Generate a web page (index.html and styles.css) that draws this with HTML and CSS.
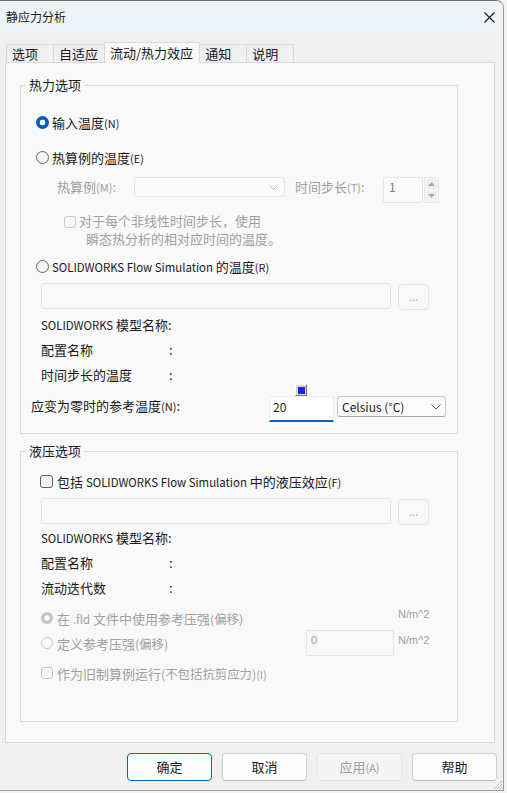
FILE: index.html
```html
<!DOCTYPE html>
<html lang="zh-CN">
<head>
<meta charset="utf-8">
<title>静应力分析</title>
<link rel="stylesheet" href="styles.css">
</head>
<body>
<div class="window">
  <div class="titlebar">
    <span class="title">静应力分析</span>
    <svg class="close" width="11" height="11" viewBox="0 0 11 11"><path d="M0.5 0.5 L10.5 10.5 M10.5 0.5 L0.5 10.5" stroke="#1a1a1a" stroke-width="1.1" fill="none"/></svg>
  </div>

  <div class="tabs">
    <div class="tab">选项</div>
    <div class="tab">自适应</div>
    <div class="tab active">流动/热力效应</div>
    <div class="tab">通知</div>
    <div class="tab">说明</div>
  </div>

  <div class="panel">
    <fieldset class="group g1">
      <legend>热力选项</legend>
      <div class="gbody g1body">
        <div class="row opt first">
          <span class="radio on"></span><span>输入温度<span class="mn">(N)</span></span>
        </div>
        <div class="row opt second">
          <span class="radio"></span><span>热算例的温度<span class="mn">(E)</span></span>
        </div>
        <div class="study">
          <span class="dis slabel">热算例<span class="mn">(M)</span>:</span>
          <div class="combo dcombo">
            <svg width="9" height="5" viewBox="0 0 9 5"><polyline points="0.5,0.5 4.5,4.5 8.5,0.5" fill="none" stroke="#b5b5b5" stroke-width="1"/></svg>
          </div>
          <span class="dis tlabel">时间步长<span class="mn">(T)</span>:</span>
          <div class="spin">
            <div class="spinval">1</div>
            <div class="spinbtns">
              <div class="sbtn"><svg width="7" height="4" viewBox="0 0 7 4"><polygon points="0,4 3.5,0 7,4" fill="#a8a8a8"/></svg></div>
              <div class="sbtn"><svg width="7" height="4" viewBox="0 0 7 4"><polygon points="0,0 3.5,4 7,0" fill="#a8a8a8"/></svg></div>
            </div>
          </div>
        </div>
        <div class="cbrow">
          <span class="check disabled"></span>
          <div class="dis cbtext">
            <div>对于每个非线性时间步长，使用</div>
            <div class="indent">瞬态热分析的相对应时间的温度。</div>
          </div>
        </div>
        <div class="row opt third">
          <span class="radio"></span><span><span class="lat">SOLIDWORKS Flow Simulation</span> 的温度<span class="mn">(R)</span></span>
        </div>
        <div class="filerow">
          <div class="field"></div>
          <div class="dots">...</div>
        </div>
        <div class="info first-info"><span><span class="lat">SOLIDWORKS</span> 模型名称:</span></div>
        <div class="info"><span class="k">配置名称</span><span>:</span></div>
        <div class="info"><span class="k">时间步长的温度</span><span>:</span></div>
        <div class="refrow">
          <span class="reflabel">应变为零时的参考温度<span class="mn">(N)</span>:</span>
          <div class="tempinput">20</div>
          <div class="combo unit">
            <span class="lat">Celsius (°C)</span>
            <svg width="10" height="6" viewBox="0 0 10 6"><polyline points="0.5,0.5 5,5 9.5,0.5" fill="none" stroke="#555" stroke-width="1"/></svg>
          </div>
          <div class="handle"><div class="handle-in"></div></div>
        </div>
      </div>
    </fieldset>

    <fieldset class="group g2">
      <legend>液压选项</legend>
      <div class="gbody g2body">
        <div class="row hcheck">
          <span class="check"></span><span>包括 <span class="lat">SOLIDWORKS Flow Simulation</span> 中的液压效应<span class="mn">(F)</span></span>
        </div>
        <div class="filerow">
          <div class="field"></div>
          <div class="dots">...</div>
        </div>
        <div class="info first-info h"><span><span class="lat">SOLIDWORKS</span> 模型名称:</span></div>
        <div class="info"><span class="k">配置名称</span><span>:</span></div>
        <div class="info"><span class="k">流动迭代数</span><span>:</span></div>
        <div class="prow p1">
          <span class="radio dfill"></span>
          <span class="dis plabel1">在 <span class="lat">.fld</span> 文件中使用参考压强<span class="mc">(偏移)</span></span>
          <span class="unitlbl">N/m^2</span>
        </div>
        <div class="prow p2">
          <span class="radio doff"></span>
          <span class="dis plabel2">定义参考压强<span class="mc">(偏移)</span></span>
          <div class="pinput">0</div>
          <span class="unitlbl u2">N/m^2</span>
        </div>
        <div class="row legacy">
          <span class="check disabled"></span><span class="dis">作为旧制算例运行<span class="mc">(不包括抗剪应力)</span><span class="mn">(I)</span></span>
        </div>
      </div>
    </fieldset>
  </div>

  <div class="buttons">
    <div class="btn default">确定</div>
    <div class="btn">取消</div>
    <div class="btn disabled">应用<span class="mn">(A)</span></div>
    <div class="btn">帮助</div>
  </div>

  <svg class="grip" width="12" height="12" viewBox="0 0 12 12">
    <path d="M11 3 L3 11 M11 6 L6 11 M11 9 L9 11" stroke="#9a9a9a" stroke-width="1" stroke-dasharray="1 1" fill="none"/>
  </svg>
</div>
</body>
</html>
```

FILE: styles.css
```css
html, body {
  margin: 0;
  padding: 0;
}

body {
  background: #f5f5f5;
  font-family: "Noto Sans CJK SC", "Noto Sans", sans-serif;
  font-size: 13px;
  color: #1a1a1a;
  width: 507px;
  height: 793px;
  overflow: hidden;
}

.window {
  position: relative;
  width: 504px;
  height: 791px;
  box-sizing: border-box;
  border-top: 1px solid #6e6e6e;
  border-right: 1px solid #9c9c9c;
  border-bottom: 1px solid #9c9c9c;
  border-top-right-radius: 8px;
  background: #f0f0f0;
  display: flex;
  flex-direction: column;
  overflow: hidden;
}

.titlebar {
  height: 32px;
  flex: none;
  background: #edf3f6;
  display: flex;
  align-items: center;
  padding-left: 6px;
}

.title {
  font-size: 12px;
  line-height: 16px;
}

.close {
  margin-left: auto;
  margin-right: 8px;
}

.lat {
  font-size: 11.4px;
}

.mn {
  font-size: 11px;
}

.mc {
  font-size: 12.4px;
}

.dis {
  color: #a0a0a0;
}

/* Tabs */
.tabs {
  display: flex;
  align-items: flex-end;
  height: 20px;
  margin-top: 9px;
  padding-left: 6px;
  flex: none;
}

.tab {
  height: 18px;
  box-sizing: border-box;
  min-width: 48px;
  border: 1px solid #d9d9d9;
  border-bottom: none;
  margin-left: -1px;
  padding: 0 6px 0 5px;
  line-height: 17px;
  background: #f0f0f0;
  white-space: nowrap;
}

.tab:first-child {
  margin-left: 0;
}

.tab.active {
  position: relative;
  z-index: 2;
  height: 21px;
  margin-bottom: -1px;
  line-height: 20px;
  background: #f9f9f9;
}

/* Panel */
.panel {
  margin-left: 5px;
  width: 490px;
  height: 681px;
  flex: none;
  box-sizing: border-box;
  border: 1px solid #d9d9d9;
  background: #f9f9f9;
  padding: 13px 0 0 14px;
}

.group {
  margin: 0;
  padding: 0;
  width: 438px;
  min-width: 0;
  box-sizing: border-box;
  border: 1px solid #dcdcdc;
}

.group legend {
  margin-left: 5px;
  padding: 0 3px;
  line-height: 18px;
  font-size: 13px;
}

.g2 {
  margin-top: 8px;
}

.g1body {
  padding-bottom: 11px;
}

.g2body {
  padding-bottom: 38px;
}

.row {
  display: flex;
  align-items: center;
  height: 20px;
  white-space: nowrap;
}

.opt {
  margin-left: 15px;
}

.opt.first { margin-top: 18px; }
.opt.second { margin-top: 15px; }
.opt.third { margin-top: 8px; }

.radio {
  flex: none;
  width: 13px;
  height: 13px;
  box-sizing: border-box;
  border-radius: 50%;
  border: 1px solid #6a6a6a;
  background: #f4f4f4;
  margin-right: 3px;
}

.radio.on {
  border: none;
  background: radial-gradient(circle at center, #ffffff 0 2.6px, #005fb8 3.2px);
}

.radio.dfill {
  width: 12px;
  height: 12px;
  border: none;
  background: radial-gradient(circle at center, #ffffff 0 2.4px, #c4c4c4 3px);
  margin-right: 4px;
}

.radio.doff {
  width: 12px;
  height: 12px;
  border: 1px solid #c9c9c9;
  background: #f9f9f9;
  margin-right: 4px;
}

.check {
  flex: none;
  width: 13px;
  height: 13px;
  box-sizing: border-box;
  border: 1px solid #5e5e5e;
  border-radius: 3px;
  background: #f4f4f4;
  margin-right: 4px;
}

.check.disabled {
  width: 12px;
  height: 12px;
  border-color: #c6c6c6;
  background: #f9f9f9;
  margin-right: 4px;
}

/* study row */
.study {
  display: flex;
  align-items: flex-start;
  height: 26px;
  margin-top: 10px;
  margin-left: 36px;
  white-space: nowrap;
}

.slabel {
  width: 77px;
  line-height: 20px;
}

.combo {
  box-sizing: border-box;
  display: flex;
  align-items: center;
  justify-content: space-between;
  border-radius: 3px;
}

.dcombo {
  width: 151px;
  height: 20px;
  border: 1px solid #e6e6e6;
  background: #fafafa;
  justify-content: flex-end;
  padding-right: 6px;
}

.tlabel {
  width: 88px;
  margin-left: 10px;
  line-height: 20px;
}

.spin {
  display: flex;
  gap: 1px;
}

.spinval {
  width: 40px;
  height: 26px;
  box-sizing: border-box;
  border: 1px solid #e6e6e6;
  border-radius: 2px;
  background: #fafafa;
  color: #7c7c7c;
  font-size: 12px;
  line-height: 18px;
  padding-left: 5px;
}

.spinbtns {
  display: flex;
  flex-direction: column;
  width: 15px;
  height: 26px;
  background: #efefef;
  border: 1px solid #e6e6e6;
  box-sizing: border-box;
}

.sbtn {
  flex: 1;
  display: flex;
  align-items: center;
  justify-content: center;
  border: 1px solid #f7f7f7;
}

/* checkbox with two lines */
.cbrow {
  display: flex;
  align-items: flex-start;
  margin-top: 9px;
  margin-left: 43px;
  white-space: nowrap;
}

.cbrow .check {
  margin-top: 4px;
  margin-right: 3px;
}

.cbtext {
  line-height: 18px;
}

.indent {
  padding-left: 7px;
}

/* file row */
.filerow {
  display: flex;
  align-items: flex-start;
  height: 27px;
  margin-top: 7px;
  margin-left: 20px;
}

.field {
  width: 350px;
  height: 26px;
  box-sizing: border-box;
  border: 1px solid #e6e6e6;
  border-radius: 3px;
  background: #f9f9f9;
}

.dots {
  width: 31px;
  height: 26px;
  margin-top: 1px;
  margin-left: 7px;
  box-sizing: border-box;
  border: 1px solid #e6e6e6;
  border-radius: 4px;
  background: #f9f9f9;
  color: #a8a8a8;
  font-size: 11px;
  line-height: 22px;
  text-align: center;
}

/* info rows */
.info {
  display: flex;
  align-items: center;
  height: 25px;
  margin-left: 20px;
  white-space: nowrap;
}

.info.first-info {
  margin-top: 2px;
}

.info.first-info.h {
  margin-top: 0;
}

.info .k {
  width: 128px;
}

/* reference temperature row */
.refrow {
  position: relative;
  display: flex;
  align-items: flex-start;
  height: 26px;
  margin-top: 9px;
  margin-left: 10px;
  white-space: nowrap;
}

.reflabel {
  width: 238px;
  line-height: 20px;
}

.tempinput {
  width: 65px;
  height: 26px;
  box-sizing: border-box;
  border: 1px solid #ececec;
  border-bottom: 2px solid #0067c0;
  border-radius: 3px 3px 0 0;
  background: #ffffff;
  font-size: 12px;
  line-height: 20px;
  padding-left: 3px;
}

.unit {
  width: 109px;
  height: 21px;
  margin-left: 3px;
  border: 1px solid #c9c9c9;
  border-bottom-color: #a9a9a9;
  background: #fbfbfb;
  padding: 0 4px 0 4px;
}

.unit .lat {
  font-size: 12px;
}

.handle {
  position: absolute;
  left: 264px;
  top: -12px;
  width: 12px;
  height: 12px;
  box-sizing: border-box;
  border: 1px solid;
  border-color: #ffffff #7a7a7a #7a7a7a #ffffff;
  background: #d6d6d6;
  display: flex;
  align-items: center;
  justify-content: center;
}

.handle-in {
  width: 7px;
  height: 7px;
  background: #1f1fff;
}

/* hydraulic */
.hcheck {
  margin-top: 11px;
  margin-left: 19px;
}

.prow {
  display: flex;
  align-items: center;
  margin-left: 20px;
  white-space: nowrap;
}

.prow.p1 {
  height: 20px;
  margin-top: 8px;
}

.prow.p2 {
  height: 26px;
  margin-top: 2px;
}

.plabel1 {
  width: 341px;
}

.plabel2 {
  width: 249px;
}

.unitlbl {
  align-self: flex-start;
  font-family: "Liberation Sans", Arial, sans-serif;
  font-size: 11px;
  line-height: 12px;
  color: #a0a0a0;
}

.unitlbl.u2 {
  margin-top: 4px;
  margin-left: 4px;
}

.pinput {
  width: 88px;
  height: 26px;
  box-sizing: border-box;
  border: 1px solid #e6e6e6;
  border-radius: 2px;
  background: #f9f9f9;
  color: #9a9a9a;
  font-family: "Liberation Sans", Arial, sans-serif;
  font-size: 11px;
  line-height: 12px;
  padding: 3px 0 0 4px;
}

.legacy {
  margin-top: 7px;
  margin-left: 20px;
}

/* buttons */
.buttons {
  display: flex;
  justify-content: flex-end;
  gap: 10px;
  margin-top: 10px;
  padding-right: 6px;
}

.btn {
  width: 85px;
  height: 28px;
  box-sizing: border-box;
  border: 1px solid #d0d0d0;
  border-bottom-color: #b8b8b8;
  border-radius: 4px;
  background: #fdfdfd;
  text-align: center;
  line-height: 26px;
}

.btn.default {
  border-color: #0067c0;
}

.btn.disabled {
  border-color: #e6e6e6;
  background: #f5f5f5;
  color: #a0a0a0;
}

.grip {
  position: absolute;
  right: 0;
  bottom: 0;
}
```
